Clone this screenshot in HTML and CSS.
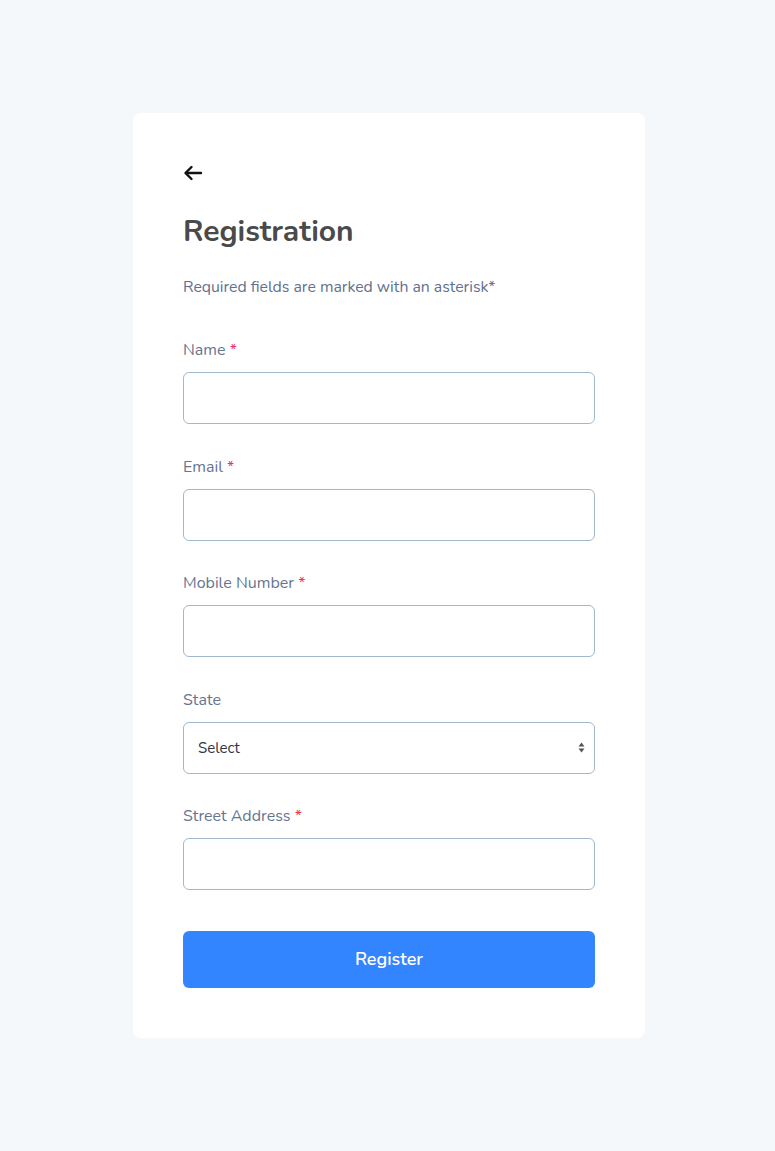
FILE: index.html
```html
<!DOCTYPE html>
<html lang="en">
<head>
    <meta charset="UTF-8">
    <meta name="viewport" content="width=device-width, initial-scale=1.0">
    <title>Registration</title>
    <link rel="stylesheet" href="styles.css">
</head>
<body>
    <div class="card">
        <a href="#" class="back" aria-label="Back">
            <svg width="20" height="16" viewBox="0 0 20 16" fill="none" stroke="#111" stroke-width="2.4" stroke-linecap="round" stroke-linejoin="round">
                <path d="M18 8H3"/>
                <path d="M8.5 2L2.5 8l6 6"/>
            </svg>
        </a>
        <h1>Registration</h1>
        <p class="hint">Required fields are marked with an asterisk*</p>

        <form id="registerForm">
            <div class="field">
                <label for="name">Name <span class="req">*</span></label>
                <input type="text" id="name" required>
            </div>
            <div class="field">
                <label for="email">Email <span class="req">*</span></label>
                <input type="email" id="email" required>
            </div>
            <div class="field">
                <label for="mobile">Mobile Number <span class="req">*</span></label>
                <input type="tel" id="mobile" required>
            </div>
            <div class="field">
                <label for="state">State</label>
                <div class="select-wrap">
                    <select id="state">
                        <option>Select</option>
                    </select>
                    <svg class="arrows" width="7" height="11" viewBox="0 0 7 11">
                        <path d="M3.5 0.5L6.5 4.5H0.5z" fill="#555"/>
                        <path d="M3.5 10.5L0.5 6.5H6.5z" fill="#555"/>
                    </svg>
                </div>
            </div>
            <div class="field">
                <label for="street">Street Address <span class="req">*</span></label>
                <input type="text" id="street" required>
            </div>
            <button type="submit">Register</button>
        </form>
    </div>
</body>
</html>
```

FILE: styles.css
```css
body {
    font-family: 'Nunito', 'Lato', sans-serif;
    background-color: #f5f8fb;
    margin: 0;
    padding: 113px 0 113px 3px;
    color: #333;
}

.card {
    width: 412px;
    margin: 0 auto;
    padding: 48px 50px 50px;
    background-color: #fff;
    border-radius: 8px;
}

.back {
    display: block;
    width: 20px;
    height: 16px;
    margin-top: 4px;
}

h1 {
    margin: 31px 0 0;
    font-size: 30px;
    line-height: 40px;
    font-weight: 700;
    color: #4a4a4a;
}

.hint {
    margin: 25px 0 42px;
    font-size: 15.8px;
    line-height: 20px;
    color: #5f7090;
}

.field {
    margin-bottom: 31.5px;
}

.field label {
    display: block;
    padding-top: 1px;
    margin-bottom: 12px;
    font-size: 16px;
    line-height: 20px;
    color: #66758f;
}

.req {
    color: #f0315b;
}

.field input,
.field select {
    display: block;
    width: 100%;
    height: 52px;
    padding: 0 14px;
    border: 1px solid #a3b8cc;
    border-radius: 6px;
    background: #fff;
    font-family: inherit;
    font-size: 15px;
    color: #2d3748;
    box-sizing: border-box;
    outline: none;
}

.select-wrap {
    position: relative;
}

.field select {
    appearance: none;
    -webkit-appearance: none;
}

.arrows {
    position: absolute;
    right: 10px;
    top: 20px;
    pointer-events: none;
}

button {
    display: block;
    width: 100%;
    height: 57px;
    margin-top: 41px;
    padding-bottom: 2px;
    background-color: #3385ff;
    color: #fff;
    border: none;
    border-radius: 6px;
    font-family: inherit;
    font-size: 18px;
    font-weight: 600;
    cursor: pointer;
}
```
